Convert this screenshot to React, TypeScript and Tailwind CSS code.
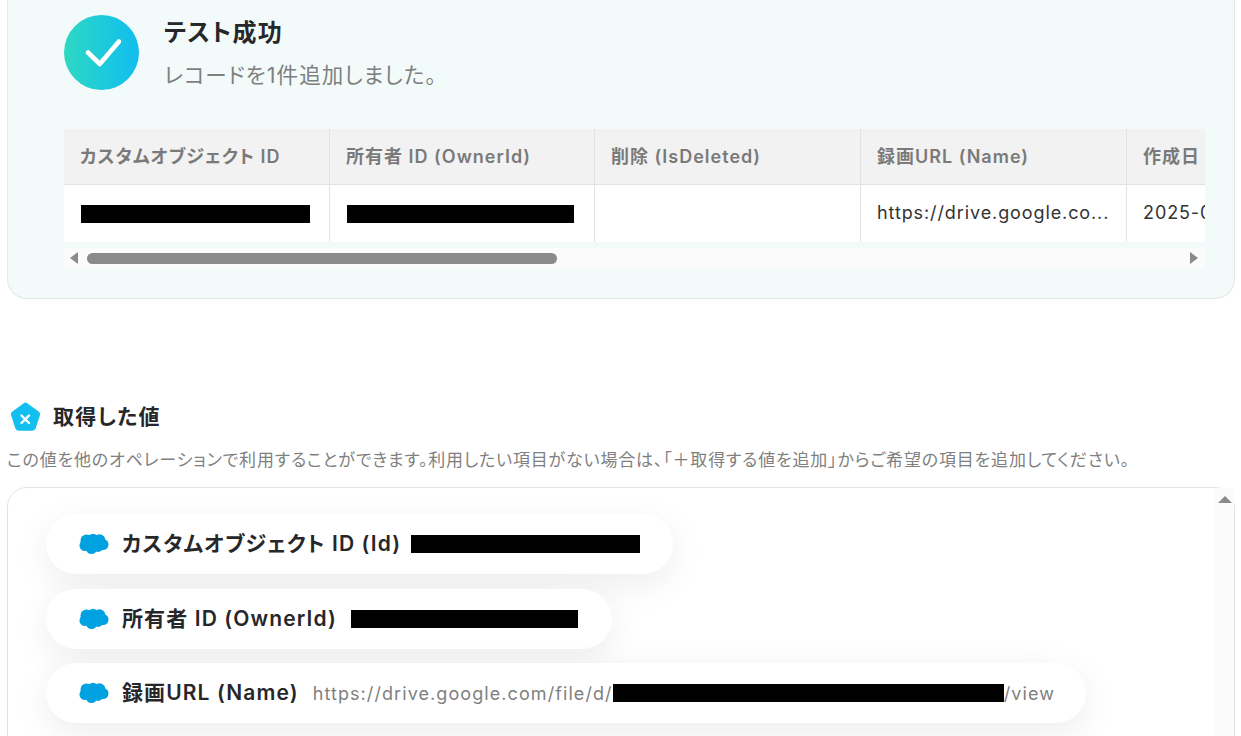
const font = { fontFamily: '"Inter","Noto Sans CJK JP",sans-serif' };

function Cloud() {
  return (
    <svg width="30" height="22" viewBox="0 0 30 22" className="shrink-0">
      <g fill="#00a1e0">
        <ellipse cx="15" cy="11" rx="11" ry="6" />
        <circle cx="7.5" cy="7.5" r="6" />
        <circle cx="14" cy="6" r="5.2" />
        <circle cx="20.5" cy="7" r="5.8" />
        <circle cx="24" cy="11.5" r="5.5" />
        <circle cx="6" cy="12.5" r="5.5" />
        <circle cx="12.5" cy="15.5" r="5.5" />
        <circle cx="19" cy="14" r="5" />
      </g>
    </svg>
  );
}

function Redact({ w }: { w: string }) {
  return <span className={`block h-[18px] bg-black shrink-0 ${w}`} />;
}

function Pill({ label, children, w }: { label: string; children: React.ReactNode; w: string }) {
  return (
    <div className={`flex h-[60px] items-center rounded-full bg-white pl-[33px] shadow-[0_10px_36px_rgba(0,0,0,0.075)] ${w}`}>
      <Cloud />
      <span className="ml-[13px] text-[21px] font-semibold tracking-[0.053em] text-[#27272a] whitespace-nowrap">{label}</span>
      {children}
    </div>
  );
}

const th = "h-full flex items-center px-4 border-r border-[#e2e2e2] text-[18px] font-semibold tracking-[0.056em] text-[#7a7a7a] whitespace-nowrap shrink-0";
const td = "h-full flex items-center px-4 border-r border-[#e2e2e2] text-[18px] tracking-[0.05em] text-[#333] whitespace-nowrap shrink-0";

export default function App() {
  return (
    <div className='h-[736px] w-[1241px] overflow-hidden bg-white [font-feature-settings:"palt"]' style={font}>
      <div className="ml-[7px] mr-[6px] h-[299px] rounded-b-[20px] border-x border-b border-[#e3e8e7] bg-[#f3fbfa] pl-[56px] pr-[29px] pt-[15px]">
        <div className="flex h-[75px]">
          <div className="flex h-[75px] w-[75px] items-center justify-center rounded-full bg-gradient-to-r from-[#2ed8c3] to-[#12bdef]">
            <svg width="38" height="30" viewBox="0 0 38 30" fill="none" className="-mt-[2px]">
              <path d="M5 15.5 L16.8 27 L36 4.5" stroke="white" strokeWidth="4.6" strokeLinecap="round" strokeLinejoin="round" />
            </svg>
          </div>
          <div className="ml-[25px]">
            <div className="text-[24px] leading-[36px] font-semibold tracking-[0.05em] text-[#27272a]">テスト成功</div>
            <div className="mt-[7px] text-[21.5px] leading-[34px] tracking-[0.05em] text-[#7f7f7f]">レコードを1件追加しました。</div>
          </div>
        </div>
        <div className="mt-[39px] overflow-hidden">
          <div className="flex h-[56px] w-[1300px] border-b border-[#e2e2e2] bg-[#f2f2f2]">
            <div className={`${th} w-[266px]`}>カスタムオブジェクト ID</div>
            <div className={`${th} w-[265px]`}>所有者 ID (OwnerId)</div>
            <div className={`${th} w-[266px]`}>削除 (IsDeleted)</div>
            <div className={`${th} w-[266px]`}>録画URL (Name)</div>
            <div className={`${th} w-[200px]`}>作成日</div>
          </div>
          <div className="flex h-[57px] w-[1300px] bg-white">
            <div className={`${td} w-[266px]`}><span className="ml-px"><Redact w="w-[229px]" /></span></div>
            <div className={`${td} w-[265px]`}><span className="ml-px"><Redact w="w-[227px]" /></span></div>
            <div className={`${td} w-[266px]`} />
            <div className={`${td} w-[266px] pb-[2px]`}>https://drive.google.co...</div>
            <div className={`${td} w-[200px] pb-[2px]`}>2025-01-01</div>
          </div>
        </div>
        <div className="mt-[6px] flex h-[20px] items-center bg-[#fbfbfb]">
          <span className="ml-[6px] h-0 w-0 border-y-[6px] border-r-[8px] border-y-transparent border-r-[#8a8a8a]" />
          <span className="ml-[9px] h-[11px] w-[470px] rounded-full bg-[#8a8a8a]" />
          <span className="ml-auto mr-[7px] h-0 w-0 border-y-[6px] border-l-[8px] border-y-transparent border-l-[#8a8a8a]" />
        </div>
      </div>

      <div className="mt-[102px] ml-[10px] flex h-[32px] items-center">
        <svg width="31" height="31" viewBox="0 0 31 31">
          <path d="M13.4 1.4a3.5 3.5 0 0 1 4.2 0l11 8a3.5 3.5 0 0 1 1.3 3.9l-4.2 13a3.5 3.5 0 0 1-3.4 2.4H8.7a3.5 3.5 0 0 1-3.4-2.4l-4.2-13a3.5 3.5 0 0 1 1.3-3.9z" fill="#13bfef" />
          <path d="M11.5 13.5 L19 21 M19 13.5 L11.5 21" stroke="white" strokeWidth="2.4" strokeLinecap="round" />
        </svg>
        <span className="ml-[12px] text-[21px] font-semibold tracking-[0.06em] text-[#27272a]">取得した値</span>
      </div>
      <div className="ml-[7px] mt-[13px] text-[17px] leading-[28px] text-[#7f7f7f] whitespace-nowrap tracking-[0.048em]">
        この値を他のオペレーションで利用することができます。利用したい項目がない場合は、「＋取得する値を追加」からご希望の項目を追加してください。
      </div>
      <div className="relative ml-[7px] mr-[6px] mt-[13px] h-[300px] rounded-t-[20px] border border-[#e3e3e3] pl-[38px] pt-[26px]">
        <div className="flex flex-col items-start gap-[14.5px]">
          <Pill label="カスタムオブジェクト ID (Id)" w="w-[627px]"><span className="ml-[10px]"><Redact w="w-[229px]" /></span></Pill>
          <Pill label="所有者 ID (OwnerId)" w="w-[566px]"><span className="ml-[14px]"><Redact w="w-[227px]" /></span></Pill>
          <Pill label="録画URL (Name)" w="w-[1040px]">
            <span className="ml-[14px] text-[18px] tracking-[0.06em] text-[#7f7f7f]">https://drive.google.com/file/d/</span>
            <Redact w="w-[391px]" />
            <span className="text-[18px] tracking-[0.06em] text-[#7f7f7f]">/view</span>
          </Pill>
        </div>
        <div className="absolute right-0 top-0 bottom-0 flex w-[19px] flex-col items-center bg-[#fbfbfb] pt-[8px]">
          <span className="h-0 w-0 border-x-[7px] border-b-[7px] border-x-transparent border-b-[#8a8a8a]" />
        </div>
      </div>
    </div>
  );
}
